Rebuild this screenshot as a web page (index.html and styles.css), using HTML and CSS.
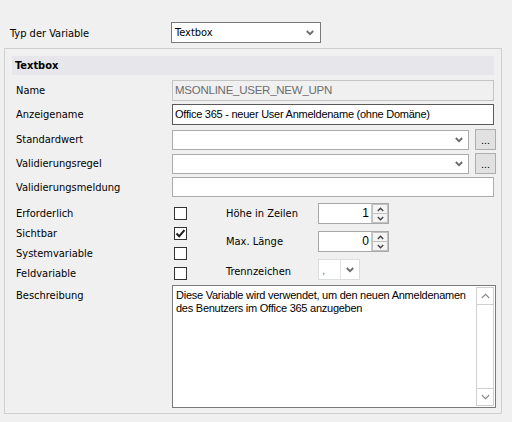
FILE: index.html
```html
<!DOCTYPE html>
<html>
<head>
<meta charset="utf-8">
<link rel="stylesheet" href="styles.css">
</head>
<body>
<div class="top">
  <span class="lbl top-lbl">Typ der Variable</span>
  <div class="combo type-combo">
    <span class="combo-text">Textbox</span>
    <svg class="chev" width="8" height="6" viewBox="0 0 8 6"><path d="M0.8 1 L4 4.2 L7.2 1" fill="none" stroke="#6b6b6b" stroke-width="1.8"/></svg>
  </div>
</div>
<div class="panel">
  <div class="panel-head">Textbox</div>
  <div class="rows">
    <div class="row r21">
      <span class="lbl">Name</span>
      <div class="field disabled">MSONLINE_USER_NEW_UPN</div>
    </div>
    <div class="row r21">
      <span class="lbl">Anzeigename</span>
      <div class="field focus">Office 365 - neuer User Anmeldename (ohne Domäne)</div>
    </div>
    <div class="row r20">
      <span class="lbl">Standardwert</span>
      <div class="combo wide-combo">
        <span class="combo-text"></span>
        <svg class="chev" width="8" height="6" viewBox="0 0 8 6"><path d="M0.8 1 L4 4.2 L7.2 1" fill="none" stroke="#6b6b6b" stroke-width="1.8"/></svg>
      </div>
      <div class="dots">...</div>
    </div>
    <div class="row r20">
      <span class="lbl">Validierungsregel</span>
      <div class="combo wide-combo">
        <span class="combo-text"></span>
        <svg class="chev" width="8" height="6" viewBox="0 0 8 6"><path d="M0.8 1 L4 4.2 L7.2 1" fill="none" stroke="#6b6b6b" stroke-width="1.8"/></svg>
      </div>
      <div class="dots">...</div>
    </div>
    <div class="row r20">
      <span class="lbl">Validierungsmeldung</span>
      <div class="field plain"></div>
    </div>
  </div>

  <div class="flags">
    <div class="checks">
      <div class="check-row"><span class="lbl">Erforderlich</span><span class="cb"></span></div>
      <div class="check-row"><span class="lbl">Sichtbar</span><span class="cb"><svg width="11" height="11" viewBox="0 0 11 11"><path d="M1.5 5.5 L4.2 8.2 L9.5 2.2" fill="none" stroke="#1e1e1e" stroke-width="2"/></svg></span></div>
      <div class="check-row"><span class="lbl">Systemvariable</span><span class="cb"></span></div>
      <div class="check-row"><span class="lbl">Feldvariable</span><span class="cb"></span></div>
    </div>
    <div class="opts">
      <div class="opt-row">
        <span class="lbl opt-lbl">Höhe in Zeilen</span>
        <div class="spin">
          <span class="spin-val">1</span>
          <div class="spin-btns">
            <span class="sb"><svg width="7" height="5" viewBox="0 0 7 5"><path d="M0.8 4 L3.5 1.3 L6.2 4" fill="none" stroke="#404040" stroke-width="1.4"/></svg></span>
            <span class="sb"><svg width="7" height="5" viewBox="0 0 7 5"><path d="M0.8 1 L3.5 3.7 L6.2 1" fill="none" stroke="#404040" stroke-width="1.4"/></svg></span>
          </div>
        </div>
      </div>
      <div class="opt-row">
        <span class="lbl opt-lbl">Max. Länge</span>
        <div class="spin">
          <span class="spin-val">0</span>
          <div class="spin-btns">
            <span class="sb"><svg width="7" height="5" viewBox="0 0 7 5"><path d="M0.8 4 L3.5 1.3 L6.2 4" fill="none" stroke="#404040" stroke-width="1.4"/></svg></span>
            <span class="sb"><svg width="7" height="5" viewBox="0 0 7 5"><path d="M0.8 1 L3.5 3.7 L6.2 1" fill="none" stroke="#404040" stroke-width="1.4"/></svg></span>
          </div>
        </div>
      </div>
      <div class="opt-row last">
        <span class="lbl opt-lbl">Trennzeichen</span>
        <div class="sep-combo">
          <span class="sep-text">,</span>
          <span class="sep-btn"><svg width="8" height="6" viewBox="0 0 8 6"><path d="M0.8 1 L4 4.2 L7.2 1" fill="none" stroke="#6b6b6b" stroke-width="1.8"/></svg></span>
        </div>
      </div>
    </div>
  </div>

  <div class="desc-row">
    <span class="lbl desc-lbl">Beschreibung</span>
    <div class="memo">
      <div class="memo-text">Diese Variable wird verwendet, um den neuen Anmeldenamen des Benutzers im Office 365 anzugeben</div>
      <div class="scroll">
        <span class="sc-btn"><svg width="9" height="6" viewBox="0 0 9 6"><path d="M0.8 5 L4.5 1.3 L8.2 5" fill="none" stroke="#8a8a8a" stroke-width="1.1"/></svg></span>
        <span class="sc-track"></span>
        <span class="sc-btn"><svg width="9" height="6" viewBox="0 0 9 6"><path d="M0.8 1 L4.5 4.7 L8.2 1" fill="none" stroke="#8a8a8a" stroke-width="1.1"/></svg></span>
      </div>
    </div>
  </div>
</div>
</body>
</html>
```

FILE: styles.css
```css
html, body {
  margin: 0;
  padding: 0;
  background: #f0f0f0;
}
body {
  width: 512px;
  height: 422px;
  overflow: hidden;
  font-family: "DejaVu Sans Condensed", "DejaVu Sans", sans-serif;
  font-size: 11px;
  color: #000;
}
.lbl {
  font-family: "DejaVu Sans Condensed", "DejaVu Sans", sans-serif;
  font-size: 11px;
  line-height: 13px;
  color: #000;
}
.top {
  display: flex;
  align-items: center;
  padding: 22px 0 0 10px;
  height: 21px;
}
.top-lbl {
  width: 161px;
  padding-top: 2px;
}
.combo {
  box-sizing: border-box;
  background: #fff;
  border: 1px solid #ababab;
  display: flex;
  align-items: center;
  justify-content: space-between;
}
.type-combo {
  width: 150px;
  height: 21px;
  border-color: #7a7a7a;
  padding: 0 6px 0 3px;
}
.type-combo .combo-text {
  font-family: "DejaVu Sans Condensed", "DejaVu Sans", sans-serif;
  font-size: 11px;
}
.chev {
  display: block;
}
.panel {
  box-sizing: border-box;
  margin: 5px 0 0 4px;
  width: 498px;
  border: 1px solid #cfcfcf;
  padding: 7px 7px 5px 7px;
}
.panel-head {
  height: 19px;
  line-height: 19px;
  background: #e7e7eb;
  font-weight: bold;
  padding-left: 3px;
  font-size: 11px;
}
.rows {
  margin-top: 5px;
  display: flex;
  flex-direction: column;
}
.row {
  display: grid;
  grid-template-columns: 160px auto auto;
  align-items: center;
  justify-content: start;
}
.row.r21 {
  height: 21px;
}
.row.r20 {
  height: 20px;
}
.row + .row {
  margin-top: 4px;
}
.row.r21 + .row.r21 {
  margin-top: 3px;
}
.row .lbl {
  padding-left: 4px;
}
.field {
  box-sizing: border-box;
  width: 322px;
  height: 21px;
  border: 1px solid #ababab;
  background: #fff;
  font-family: "Liberation Sans", Arial, sans-serif;
  font-size: 11px;
  letter-spacing: -0.25px;
  line-height: 19px;
  padding-left: 2px;
  white-space: nowrap;
}
.field.disabled {
  background: #f0f0f0;
  border-color: #c4c4c4;
  color: #6d6d6d;
  font-size: 11.5px;
}
.field.focus {
  border-color: #5a5a5a;
  color: #000;
}
.field.plain {
  height: 20px;
}
.wide-combo {
  width: 297px;
  height: 20px;
  padding-right: 5px;
}
.dots {
  box-sizing: border-box;
  width: 21px;
  height: 21px;
  align-self: start;
  margin-left: 6px;
  border: 1px solid #adadad;
  background: #e1e1e1;
  font-family: "Liberation Sans", Arial, sans-serif;
  font-size: 11px;
  text-align: center;
  line-height: 20px;
  color: #000;
}
.flags {
  display: flex;
  margin-top: 6px;
}
.checks {
  width: 214px;
  display: flex;
  flex-direction: column;
}
.check-row {
  height: 20px;
  display: grid;
  grid-template-columns: 162px 13px;
  align-items: center;
}
.check-row .lbl {
  padding-left: 4px;
}
.cb {
  box-sizing: border-box;
  width: 13px;
  height: 13px;
  border: 1px solid #333;
  background: #fff;
  display: flex;
  align-items: center;
  justify-content: center;
}
.cb svg {
  display: block;
}
.opts {
  display: flex;
  flex-direction: column;
}
.opt-row {
  display: grid;
  grid-template-columns: 92px auto;
  align-items: center;
  height: 21px;
  margin-bottom: 7px;
}
.opt-row.last {
  margin-bottom: 0;
}
.opt-row.last .opt-lbl {
  padding-top: 4px;
}
.spin {
  box-sizing: border-box;
  width: 71px;
  height: 21px;
  border: 1px solid #a8a8a8;
  background: #fff;
  display: flex;
}
.spin-val {
  flex: 1;
  text-align: right;
  font-family: "Liberation Sans", Arial, sans-serif;
  font-size: 12px;
  line-height: 19px;
  padding-right: 2px;
}
.spin-btns {
  width: 16px;
  display: flex;
  flex-direction: column;
  border-left: 1px solid #c8c8c8;
}
.sb {
  flex: 1;
  display: flex;
  align-items: center;
  justify-content: center;
  background: #f4f4f4;
  border: 1px solid #c0c0c0;
  margin: 0;
}
.sb + .sb {
  border-top: none;
}
.sb svg {
  display: block;
}
.sep-combo {
  box-sizing: border-box;
  width: 42px;
  height: 21px;
  border: 1px solid #dcdcdc;
  background: #fff;
  display: flex;
}
.sep-text {
  width: 22px;
  border-right: 1px solid #e4e4e4;
  font-family: "Liberation Sans", Arial, sans-serif;
  font-size: 11px;
  color: #777;
  padding-left: 3px;
  line-height: 20px;
  box-sizing: border-box;
}
.sep-btn {
  flex: 1;
  display: flex;
  align-items: center;
  justify-content: center;
}
.desc-row {
  display: grid;
  grid-template-columns: 160px auto;
  align-items: start;
  margin-top: 2px;
}
.desc-lbl {
  padding-left: 4px;
  padding-top: 4px;
}
.memo {
  box-sizing: border-box;
  width: 324px;
  height: 123px;
  border: 1px solid #7a7a7a;
  background: #fff;
  display: flex;
  padding: 1px;
}
.memo-text {
  flex: 1;
  font-family: "Liberation Sans", Arial, sans-serif;
  font-size: 11px;
  letter-spacing: -0.25px;
  line-height: 13px;
  padding: 2px 0 0 2px;
}
.scroll {
  box-sizing: border-box;
  width: 18px;
  border: 1px solid #d0d0d0;
  display: flex;
  flex-direction: column;
  background: #fff;
}
.sc-btn {
  height: 16px;
  display: flex;
  align-items: center;
  justify-content: center;
}
.sc-btn:first-child {
  border-bottom: 1px solid #d0d0d0;
}
.sc-btn:last-child {
  border-top: 1px solid #d0d0d0;
}
.sc-track {
  flex: 1;
}
```
